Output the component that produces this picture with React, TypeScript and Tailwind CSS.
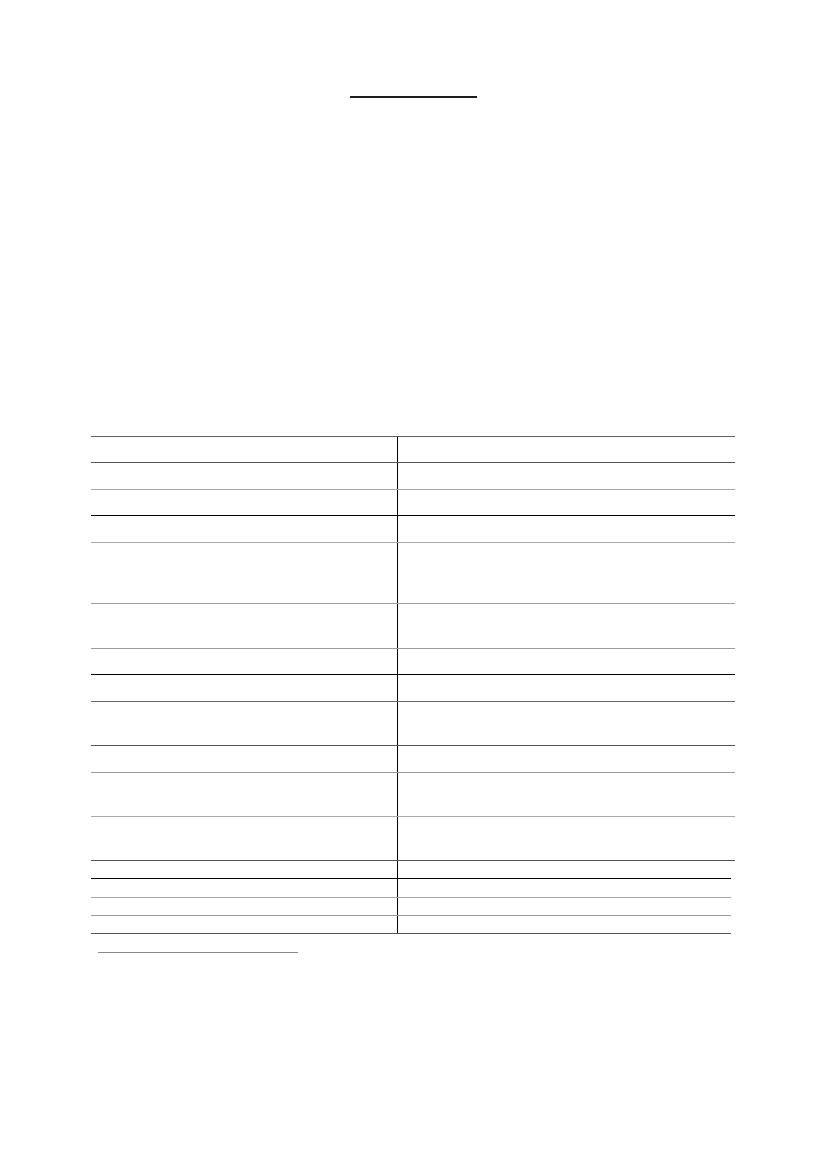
type Row = { h: number; line: string; w?: string };

// horizontal rules of the empty form, top to bottom
const rows: Row[] = [
  { h: 26, line: "border-[#5f5f5f]" },
  { h: 27, line: "border-[#555555]" },
  { h: 26, line: "border-[#a8a8a8]" },
  { h: 27, line: "border-black" },
  { h: 61, line: "border-[#aaaaaa]" },
  { h: 45, line: "border-[#a0a0a0]" },
  { h: 26, line: "border-[#9c9c9c]" },
  { h: 27, line: "border-black" },
  { h: 44, line: "border-[#6a6a6a]" },
  { h: 27, line: "border-[#555555]" },
  { h: 44, line: "border-[#9c9c9c]" },
  { h: 44, line: "border-[#aaaaaa]" },
  { h: 18, line: "border-[#555555]" },
  { h: 19, line: "border-black", w: "w-[640px]" },
  { h: 18, line: "border-[#a8a8a8]", w: "w-[640px]" },
  { h: 18, line: "border-[#9c9c9c]", w: "w-[640px]" },
];

export default function App() {
  return (
    <div className="min-h-[1169px] w-[827px] bg-white font-['Liberation_Serif',serif] text-black">
      <div className="pt-[96px]">
        <div className="ml-[350px] h-[2px] w-[127px] bg-[#1e1e1e]" />
      </div>

      <div className="ml-[91px] mt-[338px] w-[644px]">
        {rows.map((r, i) => (
          <div
            key={i}
            className={`flex border-t ${r.line} ${r.w ?? "w-[644px]"} ${
              i === rows.length - 1 ? "border-b border-b-[#555555]" : ""
            }`}
            style={{ height: r.h + (i === rows.length - 1 ? 1 : 0) }}
          >
            <div className="w-[307px] border-r border-black" />
            <div className="flex-1" />
          </div>
        ))}
      </div>

      <div className="ml-[98px] mt-[18px] h-px w-[200px] bg-[#8a8a8a]" />
    </div>
  );
}
